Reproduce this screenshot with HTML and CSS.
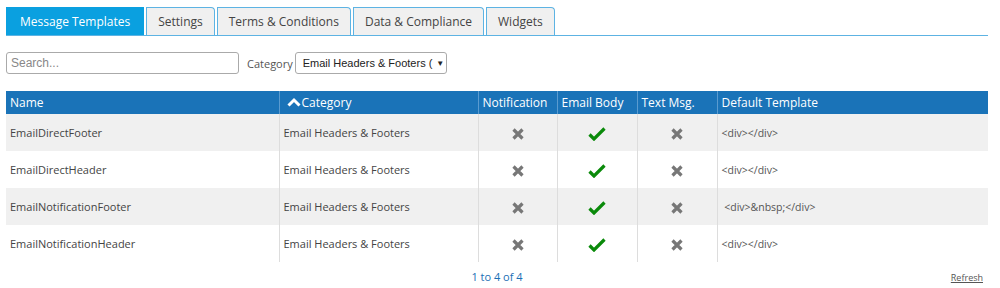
FILE: index.html
```html
<!DOCTYPE html>
<html>
<head>
<meta charset="utf-8">
<link rel="stylesheet" href="styles.css">
</head>
<body>
<div class="page">
  <div class="tabs">
    <div class="tab active">Message Templates</div>
    <div class="tab">Settings</div>
    <div class="tab">Terms &amp; Conditions</div>
    <div class="tab">Data &amp; Compliance</div>
    <div class="tab">Widgets</div>
  </div>
  <div class="filters">
    <input class="search" type="text" placeholder="Search...">
    <label class="cat-label">Category</label>
    <div class="select"><span class="select-text">Email Headers &amp; Footers (</span><span class="caret">&#9660;</span></div>
  </div>
  <table class="grid">
    <colgroup>
      <col class="c-name"><col class="c-cat"><col class="c-n"><col class="c-e"><col class="c-t"><col>
    </colgroup>
    <thead>
      <tr>
        <th>Name</th>
        <th><span class="sort"><svg width="14" height="10" viewBox="0 0 14 10"><path d="M1.5 8.5 L7 3 L12.5 8.5" fill="none" stroke="#fff" stroke-width="3"/></svg>Category</span></th>
        <th>Notification</th>
        <th>Email Body</th>
        <th>Text Msg.</th>
        <th>Default Template</th>
      </tr>
    </thead>
    <tbody>
      <tr>
        <td>EmailDirectFooter</td><td>Email Headers &amp; Footers</td>
        <td class="ic"><svg class="x" viewBox="0 0 14 14"><path d="M2.5 2.5 L11.5 11.5 M11.5 2.5 L2.5 11.5"/></svg></td>
        <td class="ic"><svg class="ok" viewBox="0 0 18 14"><path d="M1.5 7.5 L6 12 L16.5 1.5"/></svg></td>
        <td class="ic"><svg class="x" viewBox="0 0 14 14"><path d="M2.5 2.5 L11.5 11.5 M11.5 2.5 L2.5 11.5"/></svg></td>
        <td class="tpl">&lt;div&gt;&lt;/div&gt;</td>
      </tr>
      <tr>
        <td>EmailDirectHeader</td><td>Email Headers &amp; Footers</td>
        <td class="ic"><svg class="x" viewBox="0 0 14 14"><path d="M2.5 2.5 L11.5 11.5 M11.5 2.5 L2.5 11.5"/></svg></td>
        <td class="ic"><svg class="ok" viewBox="0 0 18 14"><path d="M1.5 7.5 L6 12 L16.5 1.5"/></svg></td>
        <td class="ic"><svg class="x" viewBox="0 0 14 14"><path d="M2.5 2.5 L11.5 11.5 M11.5 2.5 L2.5 11.5"/></svg></td>
        <td class="tpl">&lt;div&gt;&lt;/div&gt;</td>
      </tr>
      <tr>
        <td>EmailNotificationFooter</td><td>Email Headers &amp; Footers</td>
        <td class="ic"><svg class="x" viewBox="0 0 14 14"><path d="M2.5 2.5 L11.5 11.5 M11.5 2.5 L2.5 11.5"/></svg></td>
        <td class="ic"><svg class="ok" viewBox="0 0 18 14"><path d="M1.5 7.5 L6 12 L16.5 1.5"/></svg></td>
        <td class="ic"><svg class="x" viewBox="0 0 14 14"><path d="M2.5 2.5 L11.5 11.5 M11.5 2.5 L2.5 11.5"/></svg></td>
        <td class="tpl">&nbsp;&lt;div&gt;&amp;nbsp;&lt;/div&gt;</td>
      </tr>
      <tr>
        <td>EmailNotificationHeader</td><td>Email Headers &amp; Footers</td>
        <td class="ic"><svg class="x" viewBox="0 0 14 14"><path d="M2.5 2.5 L11.5 11.5 M11.5 2.5 L2.5 11.5"/></svg></td>
        <td class="ic"><svg class="ok" viewBox="0 0 18 14"><path d="M1.5 7.5 L6 12 L16.5 1.5"/></svg></td>
        <td class="ic"><svg class="x" viewBox="0 0 14 14"><path d="M2.5 2.5 L11.5 11.5 M11.5 2.5 L2.5 11.5"/></svg></td>
        <td class="tpl">&lt;div&gt;&lt;/div&gt;</td>
      </tr>
    </tbody>
  </table>
  <div class="pager">
    <span class="count">1 to 4 of 4</span>
    <a class="refresh" href="#">Refresh</a>
  </div>
</div>
</body>
</html>
```
FILE: styles.css
```css
html, body {
  margin: 0;
  padding: 0;
  background: #fff;
}
body {
  font-family: "Open Sans", "Noto Sans", sans-serif;
  color: #444;
}
.page {
  padding: 7px 12px 0 6px;
}
.tabs {
  display: flex;
  gap: 2px;
  border-bottom: 1px solid #5db3e3;
  height: 28px;
}
.tab {
  box-sizing: border-box;
  height: 28px;
  padding: 0 11px;
  font-size: 12px;
  line-height: 27px;
  color: #444;
  background: #f0f0f0;
  border: 1px solid #5db3e3;
  border-bottom: none;
  border-radius: 0 4px 0 0;
}
.tab.active {
  background: #0aa0e0;
  border-color: #0aa0e0;
  color: #fff;
  padding: 0 13px;
  border-radius: 0;
}
.filters {
  display: flex;
  align-items: center;
  margin-top: 16px;
  height: 22px;
}
.search {
  box-sizing: border-box;
  width: 233px;
  height: 22px;
  border: 1px solid #aaa;
  border-radius: 3px;
  padding: 0 4px;
  font-family: "Liberation Sans", Arial, sans-serif;
  font-size: 12px;
  color: #444;
  outline: none;
}
.search::placeholder {
  color: #888;
}
.cat-label {
  margin-left: 8px;
  font-size: 11px;
  color: #555;
}
.select {
  box-sizing: border-box;
  margin-left: 2px;
  width: 152px;
  height: 22px;
  border: 1px solid #aaa;
  border-radius: 3px;
  display: flex;
  align-items: center;
  padding: 0 4px 0 7px;
  font-family: "Liberation Sans", Arial, sans-serif;
  font-size: 11px;
  color: #222;
  white-space: nowrap;
}
.select-text {
  flex: 1;
  margin-right: 4px;
}
.caret {
  font-size: 8px;
  color: #222;
}
.grid {
  margin-top: 17px;
  width: 982px;
  border-collapse: collapse;
  table-layout: fixed;
}
.c-name { width: 273px; }
.c-cat { width: 199px; }
.c-n { width: 79px; }
.c-e { width: 80px; }
.c-t { width: 80px; }
.grid th {
  background: #1a73b8;
  color: #fff;
  font-weight: normal;
  font-size: 12px;
  text-align: left;
  height: 23px;
  padding: 0 4px;
  border-left: 1px solid #5a9bd0;
  white-space: nowrap;
  overflow: hidden;
}
.grid th:first-child {
  border-left: none;
}
.sort {
  display: inline-flex;
  align-items: center;
  gap: 1px;
  margin-left: 3px;
}
.grid td {
  height: 37px;
  padding: 0 4px;
  font-size: 11px;
  color: #444;
  border-left: 1px solid #ddd;
  white-space: nowrap;
}
.grid td:first-child {
  border-left: none;
}
.grid tbody tr:nth-child(odd) td {
  background: #f0f0f0;
}
.grid td.ic {
  text-align: center;
  padding: 0;
}
.grid td.tpl {
  font-size: 10.5px;
  color: #555;
}
svg.x {
  width: 14px;
  height: 14px;
  vertical-align: middle;
}
svg.x path {
  fill: none;
  stroke: #777;
  stroke-width: 3.2;
}
svg.ok {
  width: 18px;
  height: 14px;
  vertical-align: middle;
}
svg.ok path {
  fill: none;
  stroke: #0a8a0a;
  stroke-width: 3.2;
}
.pager {
  display: flex;
  justify-content: center;
  position: relative;
  width: 982px;
  height: 28px;
  align-items: center;
}
.count {
  font-size: 11px;
  color: #1a6fb5;
}
.refresh {
  position: absolute;
  right: 5px;
  top: 9px;
  font-size: 9px;
  color: #555;
  text-decoration: underline;
}
```
